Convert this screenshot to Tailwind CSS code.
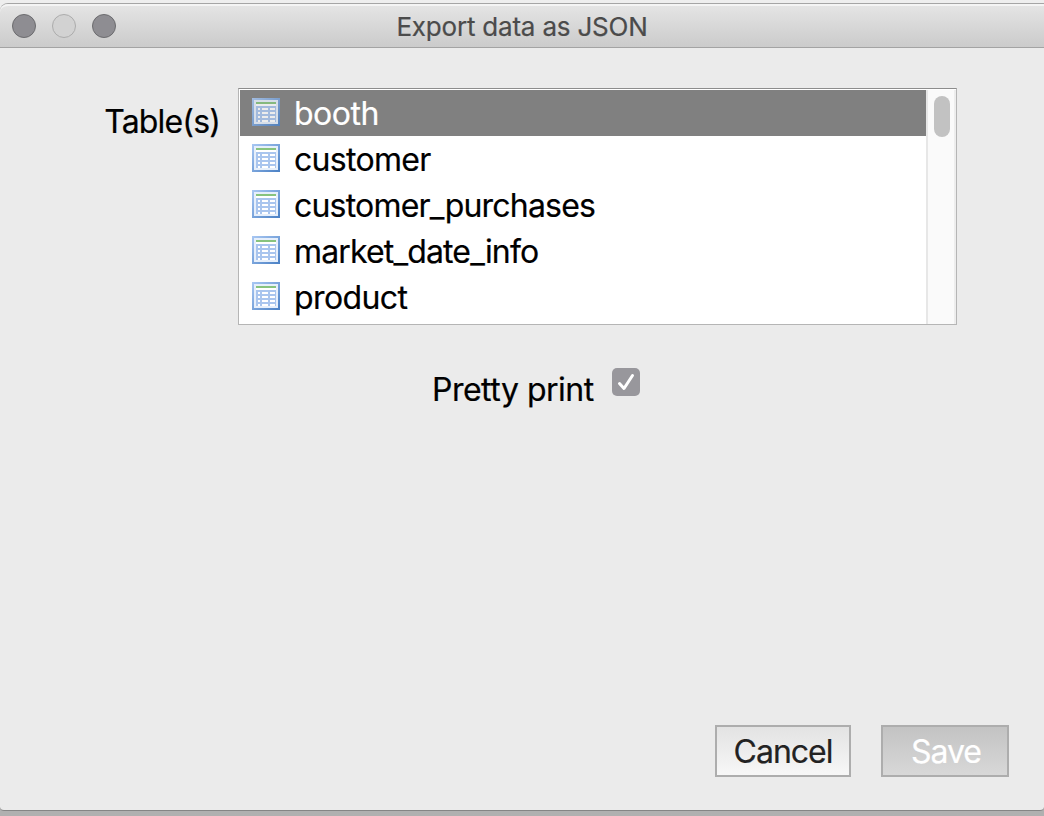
<!DOCTYPE html>
<html lang="en">
<head>
<meta charset="utf-8">
<title>Export data as JSON</title>
<script src="https://cdn.jsdelivr.net/npm/@tailwindcss/browser@4"></script>
</head>
<body class="h-[816px] w-[1044px] overflow-hidden bg-linear-to-b from-[#eeeeee] from-50% to-[#b0b0b0] to-50% pt-[3px] font-['Inter',sans-serif] text-black">
<svg class="absolute size-0">
  <defs>
    <linearGradient id="edge" x1="0" y1="0" x2="1" y2="1"><stop stop-color="#a9c8f3"/><stop offset="1" stop-color="#4a80c4"/></linearGradient>
  </defs>
  <symbol id="table" viewBox="0 0 28 28" shape-rendering="crispEdges">
    <path fill="url(#edge)" d="M0 0h28v28H0z"/>
    <path fill="#e6effb" d="M2 2h24v24H2z"/>
    <path fill="#fff" d="M4 4h20v20H4z"/>
    <path fill="#87c37e" d="M4 4h20v2H4z"/>
    <path fill="#a9c5ee" d="M4 8h20v2H4zM4 12h20v2H4zM4 16h20v2H4zM4 20h20v2H4zM4 8h2v16H4zM8 8h2v16H8zM16 8h2v16h-2zM23 8h1v16h-1z"/>
  </symbol>
</svg>
<div class="flex h-[808px] flex-col rounded-tl-[8px] rounded-b-[4px] border-y border-t-[#a5a5a5] border-b-[#858585] bg-[#ebebeb]">
  <header class="grid h-[44px] shrink-0 grid-cols-[1fr_auto_1fr] items-center rounded-tl-[8px] border-t-2 border-b border-t-[#f4f4f4] border-b-[#a3a3a3] bg-linear-to-b from-[#e4e4e4] to-[#cbcbcb]">
    <div class="-mt-0.5 flex gap-4 pl-3">
      <i class="size-6 rounded-full border border-[#6b6b6e] bg-[#8e8d92]"></i>
      <i class="size-6 rounded-full border border-[#acacac] bg-[#d2d2d2]"></i>
      <i class="size-6 rounded-full border border-[#6b6b6e] bg-[#8e8d92]"></i>
    </div>
    <h1 class="text-[26px] leading-none tracking-[-0.2px] whitespace-nowrap text-[#4b4b4b] [-webkit-text-stroke:0.2px_#4b4b4b]">Export data as JSON</h1>
    <span></span>
  </header>
  <main class="flex flex-1 flex-col pt-10 [-webkit-text-stroke:0.2px]">
    <div class="flex">
      <label class="w-[238px] pt-[14px] pr-[18px] text-right text-[32px] leading-[40px] tracking-[-0.85px]">Table(s)</label>
      <div class="flex h-[237px] w-[719px] overflow-hidden border border-t-[#8c8c8c] border-r-[#b5b5b5] border-b-[#b5b5b5] border-l-[#b5b5b5] bg-white pt-px pl-px">
        <ul class="flex-1 text-[32px] leading-[46px]">
          <li class="flex h-[46px] gap-[14px] bg-[#808080] pt-[8px] pl-3 text-white"><svg class="size-7 opacity-85"><use href="#table"/></svg><span class="-mt-[7px] tracking-[-0.5px]">booth</span></li>
          <li class="flex h-[46px] gap-[14px] pt-[8px] pl-3"><svg class="size-7"><use href="#table"/></svg><span class="-mt-[7px] tracking-[-0.7px]">customer</span></li>
          <li class="flex h-[46px] gap-[14px] pt-[8px] pl-3"><svg class="size-7"><use href="#table"/></svg><span class="-mt-[7px] tracking-[-0.8px]">customer_purchases</span></li>
          <li class="flex h-[46px] gap-[14px] pt-[8px] pl-3"><svg class="size-7"><use href="#table"/></svg><span class="-mt-[7px] tracking-[-0.85px]">market_date_info</span></li>
          <li class="flex h-[46px] gap-[14px] pt-[8px] pl-3"><svg class="size-7"><use href="#table"/></svg><span class="-mt-[7px] tracking-[-0.6px]">product</span></li>
        </ul>
        <div class="w-[30px] border-r-2 border-l-2 border-r-[#ededed] border-l-[#e7e7e7] bg-[#fafafa] pt-[6px] pl-[6px]"><div class="h-[41px] w-4 rounded-full bg-[#c2c2c2]"></div></div>
      </div>
    </div>
    <div class="mt-[43px] flex pl-[432px]">
      <span class="w-[180px] text-[32px] leading-[44px] tracking-[-0.5px]">Pretty print</span>
      <svg class="size-7" viewBox="0 0 28 28" fill="none"><rect width="28" height="28" rx="5" fill="#98979c"/><path d="M7.5 15.5L12 20.5L20.5 7.5" stroke="#fff" stroke-width="3" stroke-linecap="round" stroke-linejoin="round"/></svg>
    </div>
    <div class="mt-auto mr-[35px] mb-[33px] flex justify-end gap-[30px] text-[32px] leading-[50px] tracking-[-1px]">
      <button class="h-[52px] w-[136px] border-2 border-[#adadad] bg-linear-to-b from-[#e3e3e3] to-[#f7f7f7] text-[#222]">Cancel</button>
      <button class="h-[52px] w-[128px] border-2 border-[#adadad] bg-linear-to-b from-[#c3c3c3] to-[#d8d8d8] pl-[2px] text-white">Save</button>
    </div>
  </main>
</div>
</body>
</html>
